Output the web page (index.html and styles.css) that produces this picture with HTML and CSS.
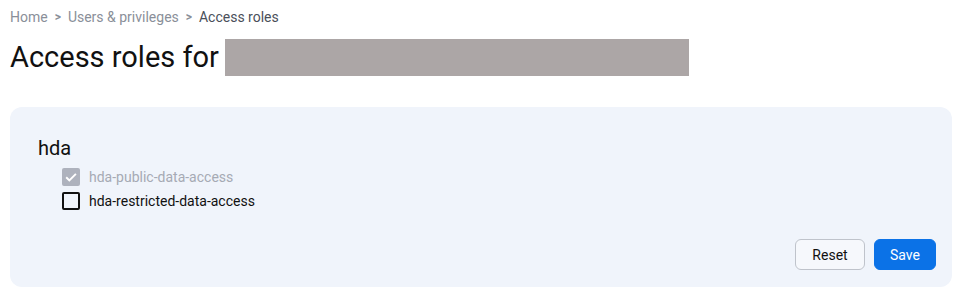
FILE: index.html
```html
<!DOCTYPE html>
<html lang="en">
<head>
  <meta charset="UTF-8" />
  <meta name="viewport" content="width=device-width, initial-scale=1.0"/>
  <title>Access roles</title>
  <link rel="stylesheet" href="styles.css">
</head>
<body>
  <nav class="breadcrumb">
    <a href="#">Home</a>
    <span class="sep">&gt;</span>
    <a href="#">Users &amp; privileges</a>
    <span class="sep">&gt;</span>
    <span class="current">Access roles</span>
  </nav>

  <h1 class="page-title">Access roles for <span class="redacted"></span></h1>

  <div class="roles-card">
    <h2 class="group-name">hda</h2>
    <ul class="role-list">
      <li class="role disabled">
        <span class="box checked">
          <svg viewBox="0 0 16 16" width="16" height="16"><path d="M2.5 8.3l3.6 3.6L13.6 4.4" fill="none" stroke="#fff" stroke-width="2.2"/></svg>
        </span>
        hda-public-data-access
      </li>
      <li class="role">
        <span class="box"></span>
        hda-restricted-data-access
      </li>
    </ul>
    <div class="actions">
      <button class="btn btn-reset">Reset</button>
      <button class="btn btn-save">Save</button>
    </div>
  </div>
</body>
</html>
```

FILE: styles.css
```css
* {
  box-sizing: border-box;
  margin: 0;
  padding: 0;
}

body {
  font-family: Roboto, 'Noto Sans', sans-serif;
  background: #fff;
  color: #1a1a1a;
  padding: 8px 13px 0 10px;
}

.breadcrumb {
  display: flex;
  align-items: center;
  font-size: 14px;
  line-height: 18px;
  color: #8a8f99;
}

.breadcrumb a {
  color: #8a8f99;
  text-decoration: none;
}

.breadcrumb .sep {
  margin: 0 7px;
  font-size: 12px;
  font-weight: bold;
}

.breadcrumb .current {
  color: #4a4f5a;
}

.page-title {
  display: flex;
  align-items: center;
  margin-top: 12px;
  font-size: 29px;
  font-weight: 400;
  line-height: 38px;
  color: #111;
}

.redacted {
  display: inline-block;
  width: 464px;
  height: 37px;
  margin-left: 6px;
  background: #aca6a6;
}

.roles-card {
  margin-top: 31px;
  background: #f0f4fb;
  border-radius: 12px;
  padding: 28px 16px 17px 28px;
}

.group-name {
  font-size: 20px;
  font-weight: 400;
  line-height: 26px;
  color: #111;
}

.role-list {
  list-style: none;
  margin-top: 4px;
  padding-left: 24px;
}

.role {
  display: flex;
  align-items: center;
  gap: 9px;
  font-size: 14px;
  line-height: 24px;
  color: #111;
}

.role.disabled {
  color: #a6aab4;
}

.box {
  width: 18px;
  height: 18px;
  border: 2px solid #111;
  border-radius: 2px;
  display: flex;
  align-items: center;
  justify-content: center;
}

.box.checked {
  background: #aeb2bd;
  border-color: #aeb2bd;
}

.actions {
  display: flex;
  justify-content: flex-end;
  gap: 9px;
  margin-top: 26px;
}

.btn {
  font-family: inherit;
  font-size: 14px;
  height: 31px;
  border-radius: 6px;
  cursor: pointer;
}

.btn-reset {
  width: 70px;
  background: #f6f8fc;
  border: 1px solid #bfc3cb;
  color: #111;
}

.btn-save {
  width: 62px;
  background: #0b72e7;
  border: 1px solid #0b72e7;
  color: #fff;
}
```
